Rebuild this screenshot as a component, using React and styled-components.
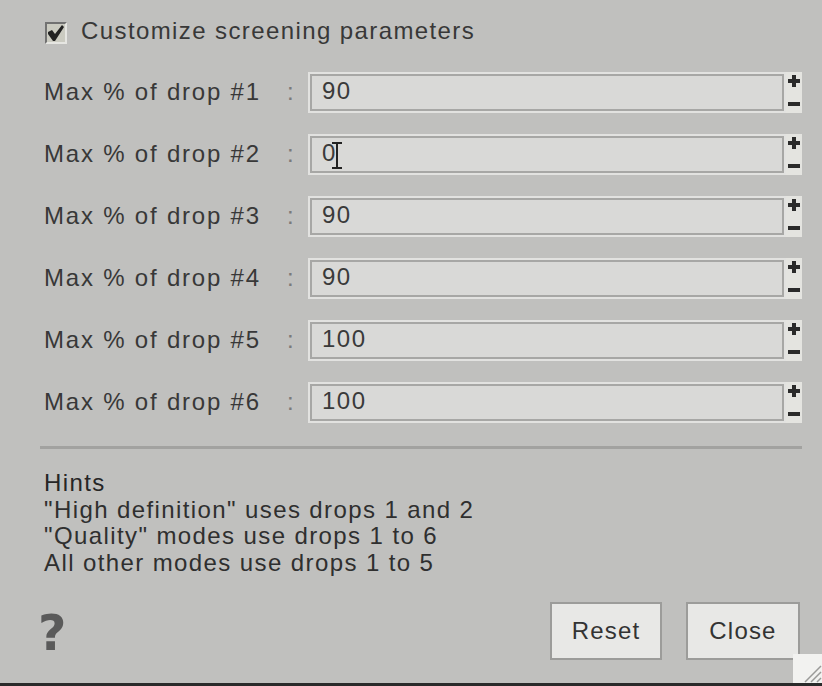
import React from 'react';
import styled, { createGlobalStyle } from 'styled-components';

const GlobalStyle = createGlobalStyle`
  html, body {
    margin: 0;
    padding: 0;
    background: #c0c0be;
  }
  body {
    font-family: "Liberation Sans", Arial, sans-serif;
  }
`;

const Page = styled.div`
  position: relative;
  width: 822px;
  height: 686px;
  display: flex;
  flex-direction: column;
  overflow: hidden;
  background: #c0c0be;
  color: #383838;
  font-size: 24px;
  letter-spacing: 1.5px;
`;

const Dialog = styled.div`
  flex: 1;
  display: flex;
  flex-direction: column;
  padding: 18px 20px 0 40px;
`;

const Header = styled.label`
  display: flex;
  align-items: flex-start;
  height: 26px;
`;

const CheckBox = styled.span`
  box-sizing: border-box;
  width: 22px;
  height: 22px;
  margin: 4px 0 0 5px;
  border-style: solid;
  border-width: 2px;
  border-color: #727272 #e6e6e2 #e6e6e2 #727272;
  background: #cbcbc1;
  display: flex;
  align-items: center;
  justify-content: center;
`;

const Title = styled.span`
  margin-left: 14px;
  line-height: 26px;
  letter-spacing: 1.4px;
`;

const ParamList = styled.div`
  margin-top: 28px;
  display: flex;
  flex-direction: column;
  gap: 21px;
`;

const Row = styled.div`
  display: flex;
  align-items: center;
  height: 41px;
  padding-left: 4px;
`;

const Label = styled.span`
  width: 243px;
  line-height: 26px;
  margin-top: -2px;
  letter-spacing: 1.8px;
`;

const Colon = styled.span`
  width: 21px;
  color: #7a7a7a;
  line-height: 26px;
  margin-top: -2px;
`;

const Field = styled.div`
  position: relative;
  flex: 1;
  align-self: stretch;
  box-sizing: border-box;
  border: 2px solid #e2e2e0;
  box-shadow: inset 0 0 0 2px #a7a7a5;
  background: #d9d9d7;
  padding: 0 12px 3px;
  display: flex;
  align-items: center;
  color: #3a3a3a;
  line-height: 26px;
`;

const Spinner = styled.div`
  width: 16px;
  align-self: stretch;
  background: #e4e4e0;
  display: flex;
  flex-direction: column;
  align-items: center;
  justify-content: space-between;
  padding: 3px 0 7px;
  box-sizing: border-box;
`;

const Cursor = styled.svg`
  position: absolute;
  left: 22px;
  top: 6px;
`;

const Separator = styled.div`
  margin-top: 23px;
  height: 3px;
  background: #a2a2a0;
`;

const Hints = styled.div`
  margin-top: 21px;
  padding-left: 4px;
  line-height: 26.5px;
  color: #2f2f2f;
  letter-spacing: 1.4px;
`;

const HintsTitle = styled.div`
  color: #262626;
`;

const Footer = styled.div`
  margin-top: 26px;
  padding-right: 2px;
  height: 58px;
  display: flex;
  align-items: center;
  gap: 24px;
`;

const Help = styled.span`
  font-family: "DejaVu Sans", sans-serif;
  font-weight: bold;
  font-size: 49px;
  line-height: 58px;
  color: #5a5a5a;
  letter-spacing: 0;
  margin: 5px auto 0 -2px;
`;

const Button = styled.button`
  box-sizing: border-box;
  width: ${p => p.$w}px;
  height: 58px;
  border: 2px solid #9c9c9a;
  background: #e8e8e6;
  color: #333;
  font-family: inherit;
  font-size: 24px;
  letter-spacing: 1.2px;
  padding: 0;
`;

const BottomBar = styled.div`
  height: 3px;
  background: #2a2a2a;
`;

const Grip = styled.svg`
  position: absolute;
  right: 0;
  bottom: 3px;
`;

const Check = () => (
  <svg width="18" height="18" viewBox="0 0 18 18">
    <path d="M1 8 L5 6 L8 10 L15 1 L17 3 L8 17 L6 17 L1 10 Z" fill="#222" />
  </svg>
);

const Plus = () => (
  <svg width="12" height="12" viewBox="0 0 12 12">
    <rect x="4" y="0" width="4" height="12" fill="#2a2a2a" />
    <rect x="0" y="4" width="12" height="4" fill="#2a2a2a" />
  </svg>
);

const Minus = () => (
  <svg width="12" height="4" viewBox="0 0 12 4">
    <rect x="0" y="0" width="12" height="4" fill="#2a2a2a" />
  </svg>
);

const drops = ['90', '0', '90', '90', '100', '100'];

export default function App() {
  return (
    <Page>
      <GlobalStyle />
      <Dialog>
        <Header>
          <CheckBox><Check /></CheckBox>
          <Title>Customize screening parameters</Title>
        </Header>

        <ParamList>
          {drops.map((v, i) => (
            <Row key={i}>
              <Label>Max % of drop #{i + 1}</Label>
              <Colon>:</Colon>
              <Field>
                {v}
                {i === 1 && (
                  <Cursor width="10" height="27" viewBox="0 0 10 27">
                    <path d="M0 1 H10 M5 1 V26 M0 26 H10" stroke="#222" strokeWidth="2" fill="none" />
                  </Cursor>
                )}
              </Field>
              <Spinner>
                <Plus />
                <Minus />
              </Spinner>
            </Row>
          ))}
        </ParamList>

        <Separator />

        <Hints>
          <HintsTitle>Hints</HintsTitle>
          <div>"High definition" uses drops 1 and 2</div>
          <div>"Quality" modes use drops 1 to 6</div>
          <div>All other modes use drops 1 to 5</div>
        </Hints>

        <Footer>
          <Help>?</Help>
          <Button $w={112}>Reset</Button>
          <Button $w={114}>Close</Button>
        </Footer>
      </Dialog>
      <BottomBar />
      <Grip width="29" height="29" viewBox="0 0 29 29">
        <rect width="29" height="29" fill="#f2f2f0" />
        <path d="M12 28 L28 12 M18 28 L28 18 M24 28 L28 24" stroke="#9a9a98" strokeWidth="1.5" />
      </Grip>
    </Page>
  );
}
